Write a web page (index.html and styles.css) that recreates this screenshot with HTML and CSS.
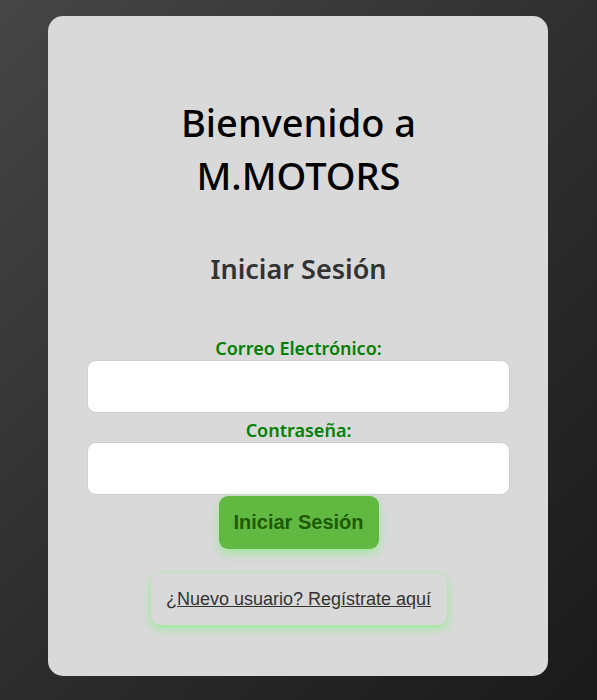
FILE: index.html
```html
<!DOCTYPE html>
<html lang="es">
<head>
<meta charset="utf-8">
<title>M.MOTORS - Iniciar Sesión</title>
<link rel="stylesheet" href="styles.css">
</head>
<body>
<div class="card">
  <h1 class="title">Bienvenido a<br>M.MOTORS</h1>
  <h2 class="subtitle">Iniciar Sesión</h2>
  <form class="form">
    <label class="label" for="email">Correo Electrónico:</label>
    <input class="input" id="email" type="email">
    <label class="label" for="pass">Contraseña:</label>
    <input class="input" id="pass" type="password">
    <button class="btn" type="button">Iniciar Sesión</button>
  </form>
  <div class="register">
    <a class="register-link" href="#">¿Nuevo usuario? Regístrate aquí</a>
  </div>
</div>
</body>
</html>
```
FILE: styles.css
```css
html, body {
  margin: 0;
  height: 100%;
}
body {
  background: linear-gradient(135deg, #464646 0%, #2e2e2e 50%, #1a1a1a 100%);
  display: flex;
  justify-content: flex-start;
  align-items: flex-start;
  padding: 16px 0 0 48px;
  box-sizing: border-box;
  font-family: "Noto Sans", sans-serif;
}
.card {
  width: 500px;
  height: 660px;
  background: #d9d9d9;
  border-radius: 15px;
  box-sizing: border-box;
  padding: 0 38px 0 39px;
  display: flex;
  flex-direction: column;
  align-items: center;
  text-align: center;
}
.title {
  margin: 80px 0 0;
  font-size: 38px;
  font-weight: 500;
  line-height: 53px;
  color: #000;
}
.subtitle {
  margin: 48px 0 0;
  font-size: 27px;
  font-weight: 600;
  color: #333;
  line-height: 38px;
}
.form {
  margin-top: 43px;
  width: 100%;
  display: flex;
  flex-direction: column;
  align-items: center;
}
.label {
  display: block;
  margin-top: 5px;
  font-size: 18px;
  font-weight: 600;
  color: #008000;
  line-height: 24px;
}
.input {
  width: 100%;
  height: 53px;
  box-sizing: border-box;
  border: 1px solid #cfcfcf;
  border-radius: 9px;
  background: #fff;
  margin: 0;
}
.btn {
  width: 160px;
  height: 53px;
  margin-top: 1px;
  background: #62b942;
  color: #1e5a00;
  border: none;
  border-radius: 9px;
  font-family: "Liberation Sans", Arial, sans-serif;
  font-size: 20px;
  font-weight: bold;
  box-shadow: 0 4px 10px rgba(144, 238, 144, 0.8);
}
.register {
  margin-top: 25px;
  width: 296px;
  height: 51px;
  box-sizing: border-box;
  border-radius: 9px;
  background: #d9d9d9;
  box-shadow: 0 3px 10px #90ee90;
  display: flex;
  align-items: center;
  justify-content: center;
}
.register-link {
  font-family: "Liberation Sans", Arial, sans-serif;
  font-size: 18px;
  color: #333;
  text-decoration: underline;
}
```
